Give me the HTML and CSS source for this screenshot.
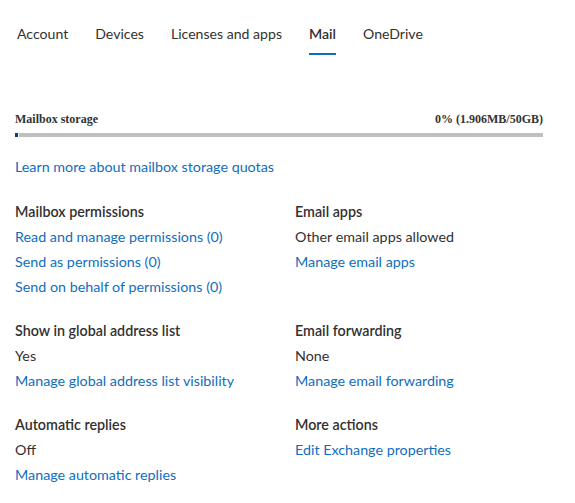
FILE: index.html
```html
<!DOCTYPE html>
<html lang="en">
<head>
<meta charset="utf-8">
<title>Mail</title>
<link rel="stylesheet" href="styles.css">
</head>
<body>
<div class="page">
  <nav class="tabs">
    <a class="tab">Account</a>
    <a class="tab">Devices</a>
    <a class="tab">Licenses and apps</a>
    <a class="tab active">Mail</a>
    <a class="tab">OneDrive</a>
  </nav>

  <section class="storage">
    <div class="storage-head">
      <span>Mailbox storage</span>
      <span>0% (1.906MB/50GB)</span>
    </div>
    <div class="bar">
      <div class="bar-used"></div>
      <div class="bar-rest"></div>
    </div>
  </section>

  <a class="link learn">Learn more about mailbox storage quotas</a>

  <div class="grid">
    <div class="group">
      <h3>Mailbox permissions</h3>
      <a class="link">Read and manage permissions (0)</a>
      <a class="link">Send as permissions (0)</a>
      <a class="link">Send on behalf of permissions (0)</a>
    </div>
    <div class="group">
      <h3>Email apps</h3>
      <p>Other email apps allowed</p>
      <a class="link">Manage email apps</a>
    </div>
    <div class="group">
      <h3>Show in global address list</h3>
      <p>Yes</p>
      <a class="link">Manage global address list visibility</a>
    </div>
    <div class="group">
      <h3>Email forwarding</h3>
      <p>None</p>
      <a class="link">Manage email forwarding</a>
    </div>
    <div class="group">
      <h3>Automatic replies</h3>
      <p>Off</p>
      <a class="link">Manage automatic replies</a>
    </div>
    <div class="group">
      <h3>More actions</h3>
      <a class="link">Edit Exchange properties</a>
    </div>
  </div>
</div>
</body>
</html>
```

FILE: styles.css
```css
html, body {
  margin: 0;
  padding: 0;
  background: #ffffff;
}

body {
  font-family: "Lato", "Segoe UI", "Noto Sans", sans-serif;
  font-size: 14.3px;
  color: #323130;
}

.page {
  padding: 0 32px 0 15px;
}

.tabs {
  display: flex;
  gap: 27px;
  padding: 24px 0 0 2px;
  font-size: 14.1px;
}

.tab {
  line-height: 20px;
  padding-bottom: 9px;
  border-bottom: 2px solid transparent;
  color: #323130;
  cursor: pointer;
}

.tab.active {
  font-weight: 600;
  border-bottom-color: #0f6cbd;
}

.storage {
  margin-top: 56px;
}

.storage-head {
  display: flex;
  justify-content: space-between;
  font-family: "Liberation Serif", "Times New Roman", serif;
  font-weight: bold;
  font-size: 12px;
  line-height: 16px;
  color: #333333;
}

.bar {
  display: flex;
  gap: 1px;
  height: 4px;
  margin-top: 6px;
}

.bar-used {
  width: 3px;
  background: #0b3f7f;
}

.bar-rest {
  flex: 1;
  background: #c0c0c0;
}

.link {
  display: block;
  color: #106ebe;
  line-height: 25px;
  cursor: pointer;
  white-space: nowrap;
}

.learn {
  margin-top: 17px;
}

.grid {
  display: grid;
  grid-template-columns: 280px 1fr;
  row-gap: 19px;
  margin-top: 20px;
}

.group h3 {
  margin: 0;
  font-size: 14.3px;
  font-weight: 600;
  line-height: 25px;
}

.group p {
  margin: 0;
  line-height: 25px;
}
```
